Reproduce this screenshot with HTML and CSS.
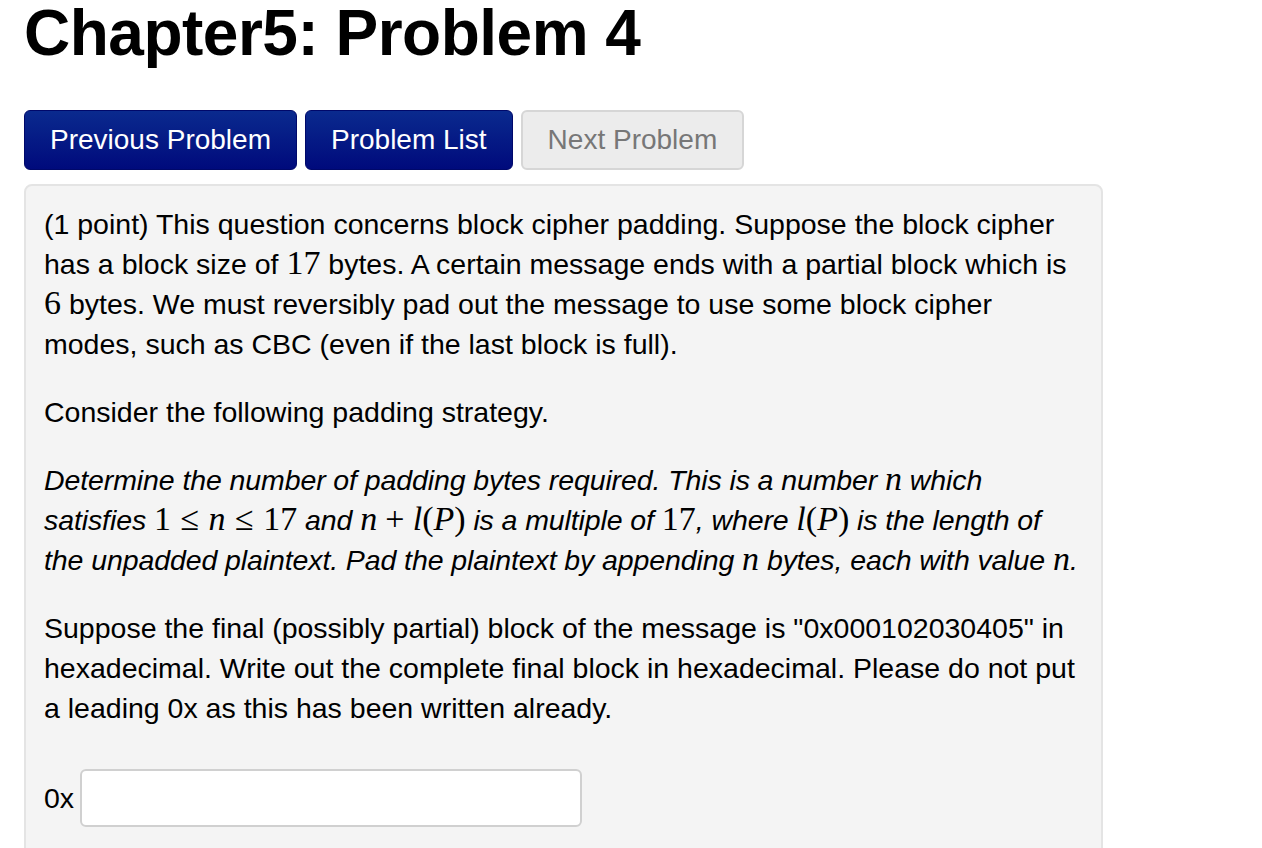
FILE: index.html
```html
<!DOCTYPE html>
<html lang="en">
<head>
    <meta charset="UTF-8">
    <title>Chapter5: Problem 4</title>
    <link rel="stylesheet" href="styles.css">
</head>
<body>
    <h1 class="title">Chapter5: Problem 4</h1>
    <div class="nav-buttons">
        <a href="#" class="nav-btn">Previous Problem</a>
        <a href="#" class="nav-btn">Problem List</a>
        <span class="nav-btn disabled">Next Problem</span>
    </div>
    <div class="problem">
        <p>(1 point) This question concerns block cipher padding. Suppose the block cipher has a block size of <span class="math">17</span> bytes. A certain message ends with a partial block which is <span class="math">6</span> bytes. We must reversibly pad out the message to use some block cipher modes, such as CBC (even if the last block is full).</p>
        <p>Consider the following padding strategy.</p>
        <p class="strategy">Determine the number of padding bytes required. This is a number <span class="math"><i>n</i></span> which satisfies <span class="math">1<span class="rel">&le;</span><i>n</i><span class="rel">&le;</span>17</span> and <span class="math"><i>n</i><span class="bin">+</span><i>l</i>(<i>P</i>)</span> is a multiple of <span class="math">17</span>, where <span class="math"><i>l</i>(<i>P</i>)</span> is the length of the unpadded plaintext. Pad the plaintext by appending <span class="math"><i>n</i></span> bytes, each with value <span class="math"><i>n</i></span>.</p>
        <p>Suppose the final (possibly partial) block of the message is "0x000102030405" in hexadecimal. Write out the complete final block in hexadecimal. Please do not put a leading 0x as this has been written already.</p>
        <div class="answer">
            <label for="answer">0x</label>
            <input type="text" id="answer">
        </div>
    </div>
</body>
</html>
```

FILE: styles.css
```css
body {
    margin: 0;
    padding: 0 24px;
    font-family: "Liberation Sans", Arial, sans-serif;
    color: #000;
    background: #fff;
}
.title {
    font-size: 64px;
    font-weight: bold;
    margin: -3px 0 0;
    line-height: 72px;
    letter-spacing: -0.5px;
}
.nav-buttons {
    display: flex;
    gap: 8px;
    margin-top: 41px;
}
.nav-btn {
    display: inline-block;
    height: 60px;
    box-sizing: border-box;
    padding: 0 25px;
    line-height: 58px;
    font-size: 28px;
    color: #fff;
    text-decoration: none;
    background: linear-gradient(#0a2a8e, #000a7c);
    border: 1px solid #00086a;
    border-radius: 6px;
}
.nav-btn.disabled {
    color: #777;
    background: #ececec;
    border: 2px solid #d6d6d6;
    line-height: 56px;
}
.problem {
    width: 1079px;
    box-sizing: border-box;
    margin-top: 14px;
    padding: 18px 14px 30px 18px;
    background: #f4f4f4;
    border: 2px solid #e4e4e4;
    border-radius: 8px;
    font-size: 28.5px;
    line-height: 40px;
}
.problem p {
    margin: 0 0 28px;
}
.strategy {
    font-style: italic;
    letter-spacing: -0.1px;
}
.math {
    font-family: "Liberation Serif", "Times New Roman", serif;
    font-style: normal;
    font-size: 34px;
    line-height: 1;
    letter-spacing: 0;
}
.math i {
    font-style: italic;
}
.math .rel {
    margin: 0 0.28em;
}
.math .bin {
    margin: 0 0.24em;
}
.answer {
    display: flex;
    align-items: center;
    gap: 6px;
    margin-top: 41px;
}
.answer input {
    width: 502px;
    height: 58px;
    box-sizing: border-box;
    border: 2px solid #d0d0d0;
    border-radius: 6px;
    background: #fff;
    font-size: 28px;
}
```
